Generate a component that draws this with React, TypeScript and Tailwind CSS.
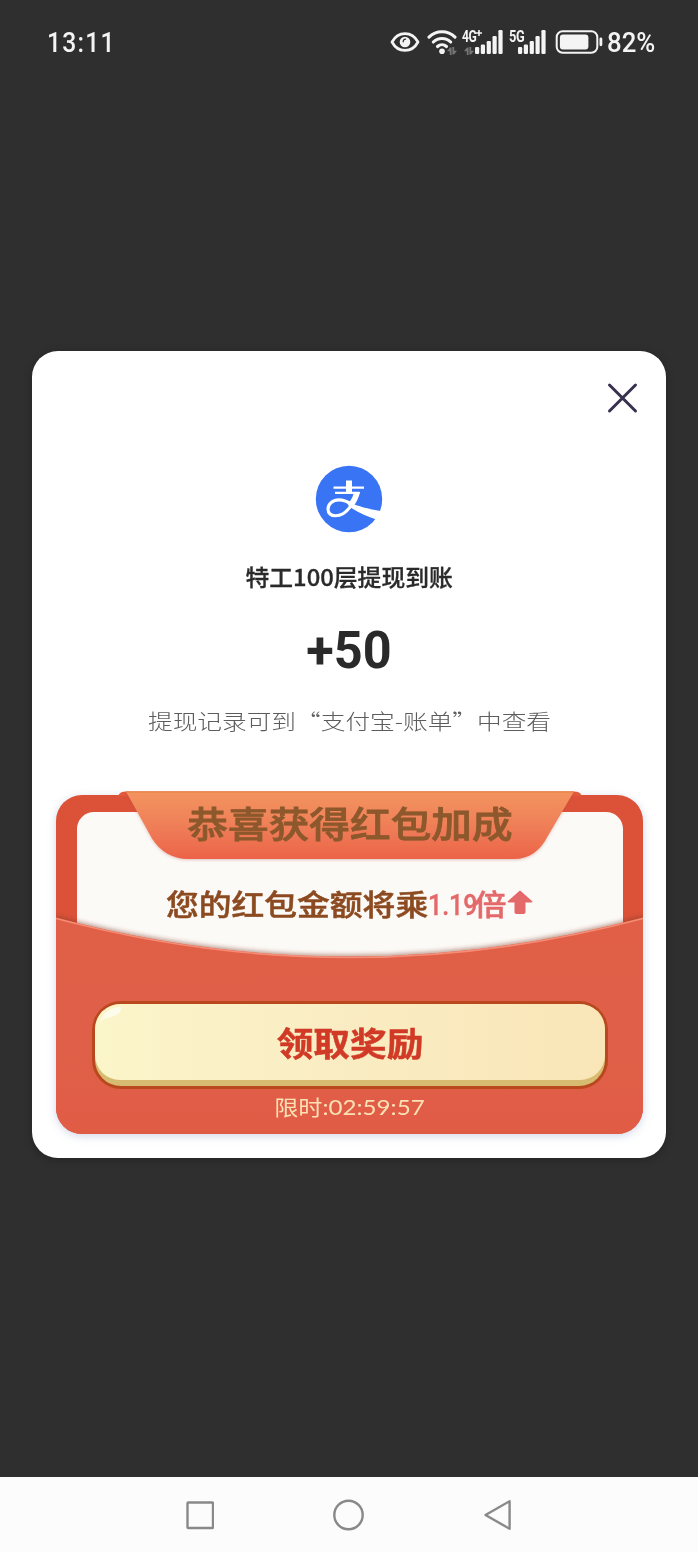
import React from 'react';

const SignalBars: React.FC = () => (
    <svg className="block" width="28" height="26" viewBox="0 0 28 26" fill="#f4f4f4">
        <rect x="0" y="18" width="4.2" height="7" rx="1.2" />
        <rect x="5.8" y="15.5" width="4.2" height="9.5" rx="1.2" />
        <rect x="11.7" y="12" width="4.2" height="13" rx="1.2" />
        <rect x="17.5" y="7" width="4.2" height="18" rx="1.2" />
        <rect x="23.4" y="1" width="4.2" height="24" rx="1.2" />
    </svg>
);

const DataArrows: React.FC = () => (
    <svg className="block" width="10" height="8" viewBox="0 0 10 8" fill="#757575">
        <path d="M0 4.2 3 .5h1.600V8H2.800V4.200zM10 3.800 7 7.500H5.400V0h1.800v3.800z" />
    </svg>
);

const StatusBar: React.FC = () => (
    <div className="h-[84px] shrink-0 flex items-center justify-between pl-[47px] pr-[41px] text-[#f4f4f4]">
        <div className="w-[70px] mt-[1px] font-['Roboto'] font-medium text-[28px] leading-none tracking-[1.4px] whitespace-nowrap">
            <span className="inline-block origin-left scale-x-[0.88]">13:11</span>
        </div>

        <div className="flex items-center h-[30px]">
            {/* Eye comfort */}
            <svg className="block" width="30" height="22" viewBox="0 0 30 22" fill="none">
                <path d="M2 11C5.2 5 9.8 2.6 15 2.6S24.8 5 28 11c-3.2 6-7.8 8.4-13 8.4S5.2 17 2 11Z" stroke="#f4f4f4" strokeWidth="2.7" strokeLinejoin="round" />
                <circle cx="15" cy="11" r="5.3" fill="#f4f4f4" />
                <path d="M13.2 10.8a2.6 2.6 0 0 1 2.4-2.700" stroke="#303030" strokeWidth="1.2" strokeLinecap="round" />
            </svg>

            {/* Wifi */}
            <div className="relative ml-[7px] w-[34px] h-[26px]">
                <svg className="block" width="30" height="26" viewBox="0 0 30 26" fill="none" stroke="#f4f4f4" strokeWidth="3.1" strokeLinecap="round">
                    <path d="M2 8.1a18.6 18.6 0 0 1 26 0" />
                    <path d="M6.3 13a12.4 12.4 0 0 1 17.4 0" />
                    <path d="M10.5 17.5a6.6 6.6 0 0 1 9 0" />
                    <circle cx="15" cy="22.3" r="2.8" fill="#f4f4f4" stroke="none" />
                </svg>
                <div className="absolute left-[20px] top-[18px]"><DataArrows /></div>
            </div>

            <div className="relative w-[42px] h-[26px] flex justify-end">
                <span className="absolute left-[1px] top-0 font-['Roboto'] font-bold text-[16px] leading-[15px] tracking-[-0.6px] origin-left scale-x-[0.76]">4G</span>
                <svg className="absolute left-[15px] top-[1px] block" width="6" height="6" viewBox="0 0 6 6" stroke="#f4f4f4" strokeWidth="1.6">
                    <path d="M3 0v6M0 3h6" />
                </svg>
                <div className="absolute left-[3px] top-[18px]"><DataArrows /></div>
                <SignalBars />
            </div>

            <div className="relative ml-[5px] w-[38px] h-[26px] flex justify-end">
                <span className="absolute left-[1px] top-0 font-['Roboto'] font-bold text-[16px] leading-[15px] tracking-[-0.3px] origin-left scale-x-[0.8]">5G</span>
                <SignalBars />
            </div>

            {/* Battery */}
            <svg className="block ml-[9px]" width="50" height="26" viewBox="0 0 50 26" fill="none">
                <rect x="1.7" y="2.2" width="40.6" height="21.6" rx="6" stroke="#f4f4f4" strokeWidth="2" />
                <rect x="4.9" y="5.6" width="28.5" height="15" rx="3" fill="#f4f4f4" />
                <rect x="44.5" y="8.6" width="2.8" height="8.6" rx="1.4" fill="#f4f4f4" />
            </svg>
            <div className="w-[50px] ml-[2px] mt-[1px] font-['Roboto'] font-medium text-[28px] leading-none whitespace-nowrap">
                <span className="inline-block origin-left scale-x-[0.92]">82%</span>
            </div>
        </div>
    </div>
);

const AlipayLogo: React.FC = () => (
    <svg className="block" width="68" height="68" viewBox="0 0 68 68" fill="none">
        <defs>
            <clipPath id="logoClip"><circle cx="34" cy="34" r="34" /></clipPath>
        </defs>
        <circle cx="34" cy="34" r="33.2" fill="#3874f4" />
        <g clipPath="url(#logoClip)">
            <path d="M18.5 21.5h30.5v2.200h-30.500zM20 26.800h24.500V29H20z" fill="#fff" />
            <path d="M31 15.400h6v12.500h-6z" fill="#fff" />
            <path d="M39 27h6c-1 4.800-2.800 9-5.600 13L34 37.500c2.600-3.200 4.300-6.700 5-10.500z" fill="#fff" />
            <path d="M37.500 38.200C33 46 28 50.800 20.500 50.800c-4.700 0-7.500-2.600-7.500-6.500 0-5.500 4.800-9.400 11-9.400 5 0 9 2 13.500 4.600" stroke="#fff" strokeWidth="3.1" />
            <path d="M31 35.500C42 41.500 53 43.800 67 46.200L63.500 55.200C53 52 43 47.500 34 41.500z" fill="#fff" />
        </g>
    </svg>
);

const Ribbon: React.FC = () => (
    <div className="absolute left-[62px] top-[-4px] w-[464px] h-[76px] flex justify-center">
        <svg className="absolute inset-0" width="464" height="76" viewBox="0 0 464 76">
            <defs>
                <linearGradient id="ribbon" x1="0" y1="0" x2="0" y2="1">
                    <stop offset="0" stopColor="#f3945f" />
                    <stop offset="0.5" stopColor="#ef7f58" />
                    <stop offset="1" stopColor="#ec6349" />
                </linearGradient>
                <filter id="ribbonShadow" x="-5%" y="-5%" width="110%" height="125%">
                    <feDropShadow dx="0" dy="1" stdDeviation="1.5" floodColor="#a04028" floodOpacity="0.3" />
                </filter>
            </defs>
            <path d="M0 5C2 1 5 .5 9 .5h446c4 0 7 .5 9 4.5z" fill="#e2593e" />
            <path d="M8 .5h448l-26.500 45C422 60 411 68 396 68H70C54 68 42 60 34 47.500z" fill="url(#ribbon)" filter="url(#ribbonShadow)" />
            <path d="M8 1h448" stroke="#e8813f" strokeWidth="1" />
        </svg>
        <h2 className="relative mt-[8px] text-[36px] leading-[46px] font-medium text-[#8c582c] whitespace-nowrap scale-x-[1.13] [-webkit-text-stroke:0.8px_#8c582c]">恭喜获得红包加成</h2>
    </div>
);

const Flap: React.FC = () => (
    <svg className="absolute left-0 bottom-0" width="587" height="236" viewBox="0 0 587 236">
        <defs>
            <linearGradient id="flap" x1="0" y1="0" x2="0" y2="1">
                <stop offset="0" stopColor="#e15f46" />
                <stop offset="0.5" stopColor="#df5f49" />
                <stop offset="1" stopColor="#e15c45" />
            </linearGradient>
            <filter id="flapShadow" x="-5%" y="-10%" width="110%" height="120%">
                <feDropShadow dx="0" dy="-2" stdDeviation="2.2" floodColor="#7a3020" floodOpacity="0.45" />
            </filter>
        </defs>
        <path d="M0 19.5Q293.5 97.5 587 19.5V236H0z" fill="url(#flap)" filter="url(#flapShadow)" />
        <path d="M0 20.5Q293.5 98.5 587 20.5" fill="none" stroke="#f58d76" strokeWidth="1.6" />
    </svg>
);

const RedPacket: React.FC = () => (
    <div className="relative w-[587px] h-[339px] ml-[24.4px] rounded-[26px] bg-[#dc5239] shadow-[0_2px_8px_rgba(120,140,190,0.35)]">
        <div className="absolute inset-0 rounded-[26px] overflow-hidden">
            <div className="mx-[20.5px] mt-[17px] h-[180px] rounded-t-[17px] bg-[#fcfaf7]"></div>
            <Flap />
        </div>
        <Ribbon />

        <div className="relative h-full flex flex-col items-center">
            <div className="mt-[86px] h-[44px] w-[368px] flex items-center font-medium text-[29px] leading-[44px] whitespace-nowrap">
                <div className="w-[262px] shrink-0 text-[#8c4a20] [-webkit-text-stroke:0.5px_#8c4a20]">
                    <span className="inline-block origin-left scale-x-[1.13]">您的红包金额将乘</span>
                </div>
                <div className="w-[46px] mt-[3px] shrink-0 text-[#e4696a] font-['Roboto'] [-webkit-text-stroke:0.4px_#e4696a]">
                    <span className="inline-block w-[46px] origin-left scale-x-[0.86]">1.19</span>
                </div>
                <div className="w-[33px] shrink-0 text-[#e4696a] [-webkit-text-stroke:0.5px_#e4696a]">
                    <span className="inline-block origin-left scale-x-[1.12]">倍</span>
                </div>
                <svg className="block shrink-0 mb-[1px]" width="26" height="25" viewBox="0 0 26 25" fill="#e4696a">
                    <path d="M12 1.200c.6-.6 1.400-.6 2 0L25 11c.8.700.5 1.500-.5 1.500H18.500V22c0 1.300-.7 2-2 2h-7c-1.300 0-2-.7-2-2v-9.500H1.500c-1 0-1.300-.8-.5-1.500z" />
                </svg>
            </div>

            <button className="mt-[76px] w-[516px] h-[88px] rounded-[29px] bg-[#b9481e] p-[3px]">
                <span className="block w-full h-full rounded-[26px] bg-[#d7bb70] pb-[6px]">
                    <span className="relative flex items-center justify-center w-full h-full rounded-[25px] bg-linear-to-r from-[#fbf5ca] via-[#faecc2] to-[#f9e6b8] overflow-hidden">
                        <svg className="absolute left-[4px] top-[2px]" width="24" height="18" viewBox="0 0 24 18">
                            <path d="M1 16C4 7 11 1 22 1c1 6-5 9-10 10-5 .8-8 2.500-11 5z" fill="#fff" opacity="0.6" />
                        </svg>
                        <span className="inline-block text-[33px] leading-[44px] font-bold text-[#d13a26] scale-x-[1.11] [-webkit-text-stroke:0.5px_#d13a26]">领取奖励</span>
                    </span>
                </span>
            </button>

            <p className="mt-[3px] font-['Lato','Noto_Sans_CJK_SC',sans-serif] text-[21px] leading-[30px] text-[#fbe0b4] whitespace-nowrap scale-x-[1.15]">限时:02:59:57</p>
        </div>
    </div>
);

const NavBar: React.FC = () => (
    <div className="h-[75px] shrink-0 bg-[#fcfcfc] flex items-center pl-[186px]">
        <svg className="block" width="28" height="30" viewBox="0 0 28 30" fill="none" stroke="#898989" strokeWidth="2.4">
            <rect x="1.5" y="2.5" width="25.5" height="25.5" rx="0.8" />
        </svg>
        <svg className="block ml-[119px]" width="32" height="32" viewBox="0 0 32 32" fill="none" stroke="#898989" strokeWidth="2.4">
            <circle cx="15.5" cy="16" r="14.2" />
        </svg>
        <svg className="block ml-[118px]" width="30" height="32" viewBox="0 0 30 32" fill="none" stroke="#898989" strokeWidth="2.4" strokeLinejoin="round">
            <path d="M2.500 16 26.600 2.200v27.600z" />
        </svg>
    </div>
);

export default function App() {
    return (
        <div className="w-[698px] h-[1552px] bg-[#2f2f2f] flex flex-col overflow-hidden font-['Noto_Sans_CJK_SC',sans-serif]">
            <StatusBar />

            <div className="flex-1 pt-[267px]">
                <div className="w-[634px] h-[806.5px] ml-[32px] rounded-[26px] bg-white flex flex-col shadow-[0_2px_8px_rgba(0,0,0,0.25)]">
                    <div className="h-[114px] shrink-0 flex justify-end pt-[31px] pr-[28px]">
                        <svg className="block" width="32" height="32" viewBox="0 0 32 32" stroke="#38304f" strokeWidth="3" strokeLinecap="round">
                            <path d="M3.500 3 29.500 29M29.500 3 3.500 29" />
                        </svg>
                    </div>

                    <div className="flex flex-col items-center h-[330px] shrink-0 whitespace-nowrap">
                        <AlipayLogo />
                        <h1 className="mt-[26px] h-[34px] text-[23px] leading-[34px] font-medium text-[#2a2a2a] scale-x-[1.035] [-webkit-text-stroke:0.3px_#2a2a2a]">特工100层提现到账</h1>
                        <div className="mt-[28px] h-[60px] font-['Roboto'] text-[52px] leading-[60px] font-bold text-[#2a2a2a] scale-x-[0.97]">+50</div>
                        <p className="mt-[23px] h-[32px] text-[21px] leading-[32px] font-light text-[#5c5c5c] scale-x-[1.175]">提现记录可到“支付宝-账单”中查看</p>
                    </div>

                    <RedPacket />
                </div>
            </div>

            <NavBar />
        </div>
    );
}
